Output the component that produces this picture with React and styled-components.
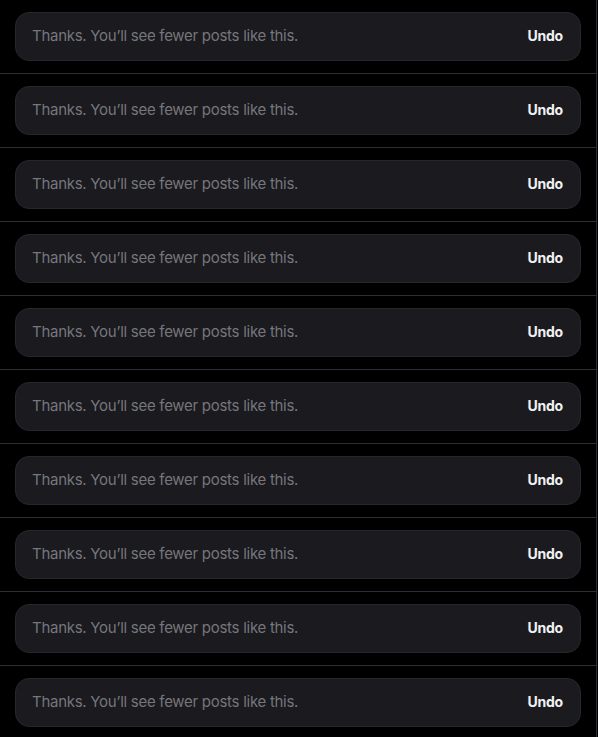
import styled, { createGlobalStyle } from "styled-components"

const GlobalStyle = createGlobalStyle`
  html, body {
    margin: 0;
    padding: 0;
    background-color: #000;
  }
  body {
    font-family: Inter, "Noto Sans", sans-serif;
  }
`

function App() {
  const rows = Array.from({ length: 10 })

  return (
    <Feed>
      <GlobalStyle />
      {rows.map((_, i) => (
        <Row key={i}>
          <Notice>
            <Message>Thanks. You’ll see fewer posts like this.</Message>
            <UndoButton>Undo</UndoButton>
          </Notice>
        </Row>
      ))}
    </Feed>
  )
}

const Feed = styled.main`
  width: 596px;
  min-height: 737px;
  border-right: 1px solid #2f2f33;
  background-color: #000;
`

const Row = styled.div`
  padding: 12px 15px;
  border-bottom: 1px solid #2f2f33;
`

const Notice = styled.div`
  display: flex;
  align-items: center;
  justify-content: space-between;
  box-sizing: border-box;
  height: 49px;
  padding: 0 17px 2px 16px;
  background-color: #1a1a1f;
  border: 1px solid #26262c;
  border-radius: 14px;
`

const Message = styled.span`
  color: #76767c;
  font-size: 15px;
  letter-spacing: -0.28px;
`

const UndoButton = styled.button`
  border: none;
  background: none;
  padding: 0;
  color: #f1f1f3;
  font-family: Inter, "Noto Sans", sans-serif;
  font-size: 14px;
  font-weight: 700;
  letter-spacing: -0.2px;
  cursor: pointer;
`

export default App
